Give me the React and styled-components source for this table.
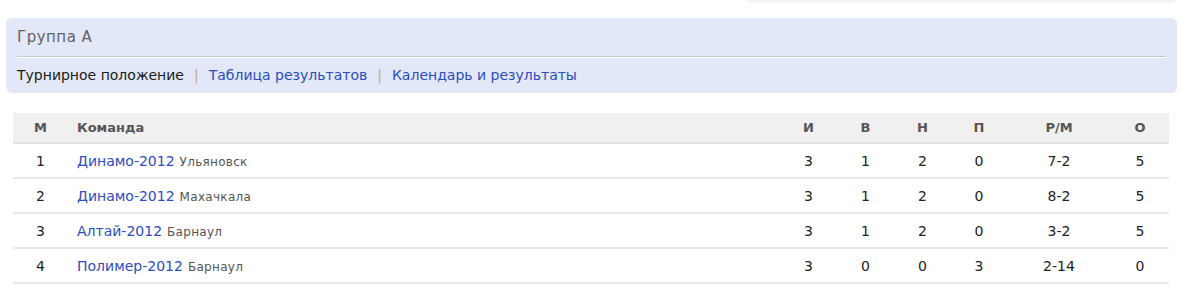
import React from "react";
import styled, { createGlobalStyle } from "styled-components";

const GlobalStyle = createGlobalStyle`
  body {
    margin: 0;
    background: #ffffff;
    font-family: "DejaVu Sans", Verdana, sans-serif;
  }
`;

const Page = styled.div`
  width: 1200px;
  display: flex;
  flex-direction: column;
`;

const TopStub = styled.div`
  align-self: flex-end;
  width: 428px;
  height: 3px;
  margin-right: 24px;
  background: #f2f2f2;
  border-radius: 0 0 4px 4px;
`;

const GroupCard = styled.div`
  margin: 15px 23px 0 6px;
  padding: 0 11px;
  background: #e2e8f8;
  border-radius: 6px;
`;

const GroupTitle = styled.div`
  height: 38px;
  display: flex;
  align-items: center;
  font-size: 15px;
  letter-spacing: 0.5px;
  color: #636363;
  border-bottom: 1px solid #c9c9c9;
  box-shadow: 0 1px 0 #ffffff;
`;

const Tabs = styled.div`
  height: 36px;
  display: flex;
  align-items: center;
  font-size: 14px;
`;

const Tab = styled.a`
  color: ${(p) => (p.$active ? "#1a1a1a" : "#2c4cbf")};
  text-decoration: none;
`;

const Sep = styled.span`
  color: #c9a878;
  margin: 0 10px;
`;

const Table = styled.table`
  margin: 20px 30px 0 13px;
  width: 1156px;
  border-collapse: collapse;
  font-size: 14px;
  color: #222;
`;

const Th = styled.th`
  height: 29px;
  background: #f0f0f0;
  color: #555;
  font-weight: bold;
  font-size: 13px;
  text-align: ${(p) => p.$align || "center"};
  width: ${(p) => p.$w || "auto"};
  border-bottom: 2px solid #e4e4e4;
  padding: 0 0 0 ${(p) => p.$pl || "0"};
`;

const Td = styled.td`
  height: 33px;
  text-align: ${(p) => p.$align || "center"};
  border-bottom: 2px solid #e8e8e8;
  padding: 0 0 0 ${(p) => p.$pl || "0"};
`;

const TeamLink = styled.a`
  color: #2c4cbf;
  text-decoration: none;
  font-size: 14px;
`;

const City = styled.span`
  color: #555;
  font-size: 12px;
  letter-spacing: 0.3px;
  margin-left: 5px;
`;

const rows = [
  [1, "Динамо-2012", "Ульяновск", 3, 1, 2, 0, "7-2", 5],
  [2, "Динамо-2012", "Махачкала", 3, 1, 2, 0, "8-2", 5],
  [3, "Алтай-2012", "Барнаул", 3, 1, 2, 0, "3-2", 5],
  [4, "Полимер-2012", "Барнаул", 3, 0, 0, 3, "2-14", 0],
];

const App = () => {
  return (
    <Page>
      <GlobalStyle />
      <TopStub />
      <GroupCard>
        <GroupTitle>Группа А</GroupTitle>
        <Tabs>
          <Tab $active>Турнирное положение</Tab>
          <Sep>|</Sep>
          <Tab href="#">Таблица результатов</Tab>
          <Sep>|</Sep>
          <Tab href="#">Календарь и результаты</Tab>
        </Tabs>
      </GroupCard>
      <Table>
        <thead>
          <tr>
            <Th $w="55px">М</Th>
            <Th $align="left" $pl="9px">Команда</Th>
            <Th $w="57px">И</Th>
            <Th $w="57px">В</Th>
            <Th $w="57px">Н</Th>
            <Th $w="56px">П</Th>
            <Th $w="104px">Р/М</Th>
            <Th $w="58px">О</Th>
          </tr>
        </thead>
        <tbody>
          {rows.map((r) => (
            <tr key={r[0]}>
              <Td>{r[0]}</Td>
              <Td $align="left" $pl="9px">
                <TeamLink href="#">{r[1]}</TeamLink>
                <City>{r[2]}</City>
              </Td>
              <Td>{r[3]}</Td>
              <Td>{r[4]}</Td>
              <Td>{r[5]}</Td>
              <Td>{r[6]}</Td>
              <Td>{r[7]}</Td>
              <Td>{r[8]}</Td>
            </tr>
          ))}
        </tbody>
      </Table>
    </Page>
  );
};

export default App;
